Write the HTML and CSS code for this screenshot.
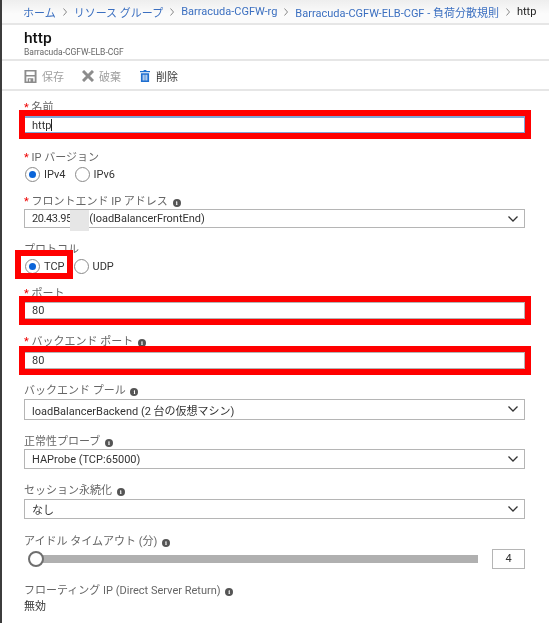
FILE: index.html
```html
<!DOCTYPE html>
<html>
  <head>
    <meta charset="utf-8">
    <title>http - 負荷分散規則</title>
    <link rel="stylesheet" href="styles.css">
  </head>
  <body>
    <nav class="crumbs">
      <a>ホーム</a>
      <svg class="sep" width="4" height="8" viewBox="0 0 4 8"><path fill="none" stroke="#888" d="M.5 .5L3.500 4 .5 7.500"/></svg>
      <a>リソース グループ</a>
      <svg class="sep" width="4" height="8" viewBox="0 0 4 8"><path fill="none" stroke="#888" d="M.5 .5L3.500 4 .5 7.500"/></svg>
      <a>Barracuda-CGFW-rg</a>
      <svg class="sep" width="4" height="8" viewBox="0 0 4 8"><path fill="none" stroke="#888" d="M.5 .5L3.500 4 .5 7.500"/></svg>
      <a>Barracuda-CGFW-ELB-CGF - 負荷分散規則</a>
      <svg class="sep" width="4" height="8" viewBox="0 0 4 8"><path fill="none" stroke="#888" d="M.5 .5L3.500 4 .5 7.500"/></svg>
      <span class="crumb-now">http</span>
    </nav>

    <header class="head">
      <h1>http</h1>
      <div class="sub">Barracuda-CGFW-ELB-CGF</div>
    </header>

    <div class="toolbar">
      <span class="tool off">
        <svg width="13" height="13" viewBox="0 0 13 14"><path fill="#8c8c8c" d="M0 0h13v14H0zM2 1.500v4h9v-4zM2 7v5.500h1.500V9h6v3.500H11V7zM5 10v2.500h1.500V10z" fill-rule="evenodd"/></svg>
        <span>保存</span>
      </span>
      <span class="tool off">
        <svg width="12" height="12" viewBox="0 0 12 12"><path stroke="#8c8c8c" stroke-width="3" d="M1 1l10 10M11 1L1 11"/></svg>
        <span>破棄</span>
      </span>
      <span class="tool del">
        <svg width="10" height="12" viewBox="0 0 11 13"><path fill="#1f6fd0" d="M4 0h3v1h4v1.500H0V1h4zM1 3.500h9V13H1zM3 5v6.500h1V5zM5 5v6.500h1V5zM7 5v6.500h1V5z" fill-rule="evenodd"/></svg>
        <span>削除</span>
      </span>
    </div>

    <form class="form">
      <div class="field f-name">
        <label><i>*</i> 名前</label>
        <div class="box active"><span>http</span><span class="caret"></span></div>
        <div class="mark"></div>
      </div>

      <div class="field f-ipver">
        <label><i>*</i> IP バージョン</label>
        <div class="radios">
          <span class="radio on"></span><span class="rtext">IPv4</span>
          <span class="radio"></span><span class="rtext">IPv6</span>
        </div>
      </div>

      <div class="field f-front">
        <label><i>*</i> フロントエンド IP アドレス <b class="info">i</b></label>
        <div class="box select">
          <span class="ip">20.43.95.</span><span class="hidden-ip"></span><span>(loadBalancerFrontEnd)</span>
          <svg class="chev" width="10" height="6" viewBox="0 0 10 6"><path fill="none" stroke="#333" stroke-width="1.300" d="M.5 .5L5 5 9.500 .5"/></svg>
          <span class="patch"></span>
        </div>
      </div>

      <div class="field f-proto">
        <label>プロトコル</label>
        <div class="radios">
          <span class="radio on"></span><span class="rtext">TCP</span>
          <span class="radio"></span><span class="rtext">UDP</span>
        </div>
        <div class="mark mark-tcp"></div>
      </div>

      <div class="field f-port">
        <label><i>*</i> ポート</label>
        <div class="box"><span>80</span></div>
        <div class="mark"></div>
      </div>

      <div class="field f-back">
        <label><i>*</i> バックエンド ポート <b class="info">i</b></label>
        <div class="box"><span>80</span></div>
        <div class="mark"></div>
      </div>

      <div class="field">
        <label>バックエンド プール <b class="info">i</b></label>
        <div class="box select tall">
          <span>loadBalancerBackend (2 台の仮想マシン)</span>
          <svg class="chev" width="10" height="6" viewBox="0 0 10 6"><path fill="none" stroke="#333" stroke-width="1.300" d="M.5 .5L5 5 9.500 .5"/></svg>
        </div>
      </div>

      <div class="field f-probe">
        <label>正常性プローブ <b class="info">i</b></label>
        <div class="box select wide">
          <span>HAProbe (TCP:65000)</span>
          <svg class="chev" width="10" height="6" viewBox="0 0 10 6"><path fill="none" stroke="#333" stroke-width="1.300" d="M.5 .5L5 5 9.500 .5"/></svg>
        </div>
      </div>

      <div class="field">
        <label>セッション永続化 <b class="info">i</b></label>
        <div class="box select wide">
          <span>なし</span>
          <svg class="chev" width="10" height="6" viewBox="0 0 10 6"><path fill="none" stroke="#333" stroke-width="1.300" d="M.5 .5L5 5 9.500 .5"/></svg>
        </div>
      </div>

      <div class="field f-idle">
        <label>アイドル タイムアウト (分) <b class="info">i</b></label>
        <div class="slider-row">
          <div class="track"><span class="thumb"></span></div>
          <div class="num">4</div>
        </div>
      </div>

      <div class="field">
        <label>フローティング IP (Direct Server Return) <b class="info">i</b></label>
        <div class="value">無効</div>
      </div>
    </form>
  </body>
</html>
```

FILE: styles.css
```css
body {
  margin: 0;
  padding: 0;
  height: 623px;
  overflow: hidden;
  background-color: #FFFFFF;
  border-left: 2px solid #3c3c3c;
  font-family: Roboto, "Noto Sans CJK JP", sans-serif;
  font-size: 11px;
  color: #333;
}

/* the reference is a slightly soft screenshot */
.crumbs > *, .head h1, .sub, .tool, label, .box > span, .rtext, .num, .value {
  filter: blur(0.4px);
}

.crumbs {
  display: flex;
  align-items: center;
  height: 23px;
  padding-left: 21px;
  background: linear-gradient(#eeeeee, #fbfbfb 60%);
  border-bottom: 2px solid #e6e6e6;
  color: #3b6fc0;
  white-space: nowrap;
}

.sep {
  margin: 0 7px;
}

.crumb-now {
  color: #222;
}

.head {
  height: 36px;
  padding-left: 22px;
  box-sizing: border-box;
  border-bottom: 2px solid #e6e6e6;
}

h1 {
  margin: 0;
  padding-top: 3px;
  font-size: 15.500px;
  line-height: 20px;
  font-weight: 500;
  color: #111;
}

.sub {
  margin-top: -1px;
  font-size: 8.500px;
  line-height: 10px;
  color: #666;
}

.toolbar {
  display: flex;
  align-items: center;
  gap: 18px;
  height: 30px;
  padding: 2px 0 0 22px;
  box-sizing: border-box;
  border-bottom: 2px solid #e6e6e6;
}

.tool {
  display: flex;
  align-items: center;
  gap: 5px;
}

.tool.off {
  color: #a0a0a0;
}

.tool.del {
  gap: 6px;
  margin-left: 1px;
}

.form {
  padding: 8px 24px 0 22px;
}

.field {
  position: relative;
  margin-bottom: 13px;
}

.f-name {
  margin-bottom: 16px;
}

.f-ipver {
  margin-bottom: 11px;
}

.f-proto {
  margin-bottom: 11px;
}

.f-port {
  margin-bottom: 14px;
}

.f-idle {
  margin-top: 14px;
  margin-bottom: 14px;
}

label {
  display: block;
  height: 16px;
  line-height: 18px;
  margin-bottom: 1px;
  color: #666;
  white-space: nowrap;
}

label i {
  color: #e00;
  font-style: normal;
}

.f-back label {
  margin-bottom: 3px;
}

.f-front label,
.f-probe label {
  margin-bottom: 0;
}

.info {
  display: inline-block;
  width: 8px;
  height: 8px;
  margin-left: 2px;
  border-radius: 50%;
  background-color: #555;
  color: #fff;
  font: bold 7px/8px "Liberation Serif", serif;
  text-align: center;
  vertical-align: 0;
}

.box {
  position: relative;
  box-sizing: border-box;
  display: flex;
  align-items: center;
  height: 17px;
  padding-left: 7px;
  background-color: #fff;
  border: 1px solid #b5b5b5;
  color: #333;
  white-space: nowrap;
}

.box.active {
  border-color: #7da6d8;
  border-top-width: 2px;
}

.box.select {
  height: 19px;
}

.box.wide {
  height: 20px;
}

.box.tall {
  height: 21px;
}

.caret {
  width: 1px;
  height: 12px;
  background-color: #222;
}

.chev {
  position: absolute;
  right: 6px;
  top: 6px;
}

.ip {
  letter-spacing: -0.4px;
}

.hidden-ip {
  display: inline-block;
  width: 15px;
}

.patch {
  position: absolute;
  left: 45px;
  top: 0;
  width: 19px;
  height: 21px;
  background-color: #e6e6e6;
}

.radios {
  display: flex;
  align-items: center;
  height: 16px;
  margin-left: 1px;
}

.radio {
  box-sizing: border-box;
  position: relative;
  width: 15px;
  height: 15px;
  margin-right: 4px;
  border: 1px solid #8a8a8a;
  border-radius: 50%;
}

.radio.on::after {
  content: "";
  position: absolute;
  left: 3px;
  top: 3px;
  width: 7px;
  height: 7px;
  border-radius: 50%;
  background-color: #0a64d8;
}

.rtext {
  margin-right: 9px;
}

/* red annotation frames drawn over the form */
.mark {
  position: absolute;
  left: -5px;
  right: -6px;
  bottom: -6px;
  height: 17px;
  border: 6px solid #ff0000;
}

.mark-tcp {
  left: -9px;
  right: auto;
  bottom: -5px;
  width: 46px;
  height: 17px;
}

.slider-row {
  display: flex;
  align-items: center;
  height: 18px;
}

.track {
  position: relative;
  flex: 1;
  height: 8px;
  margin: 0 14px 0 6px;
  background-color: #b0b0b0;
}

.thumb {
  position: absolute;
  left: -2px;
  top: -4px;
  box-sizing: border-box;
  width: 16px;
  height: 16px;
  background-color: #fff;
  border: 2px solid #6e6e6e;
  border-radius: 50%;
}

.num {
  box-sizing: border-box;
  width: 33px;
  height: 20px;
  border: 1px solid #b5b5b5;
  line-height: 18px;
  text-align: center;
}

.value {
  line-height: 16px;
  color: #333;
}
```
